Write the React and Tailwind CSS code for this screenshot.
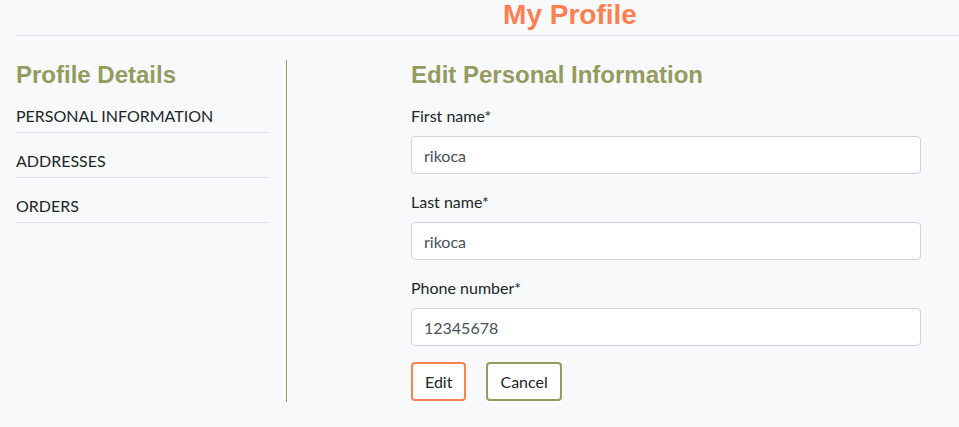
const olive = "text-[#949b5f]";

const navItems = ["PERSONAL INFORMATION", "ADDRESSES", "ORDERS"];

const fields = [
  { label: "First name", value: "rikoca" },
  { label: "Last name", value: "rikoca" },
  { label: "Phone number", value: "12345678" },
];

const Field = ({ label, value }) => (
  <div className="mb-4">
    <label className="block mb-2 text-base leading-6 text-[#212529]">
      {label}*
    </label>
    <input
      defaultValue={value}
      className="block w-full h-[38px] px-3 text-base text-[#495057] bg-white border border-[#ced4da] rounded-[4px] outline-none"
    />
  </div>
);

export default function App() {
  return (
    <div
      className="min-h-screen w-full overflow-hidden bg-[#f8f9fa] text-[#212529]"
      style={{ fontFamily: "Lato, 'Noto Sans', sans-serif" }}
    >
      <div className="pl-4">
        <div className="w-[1108px] border-b border-[#dee2e6] flex justify-center h-[36px]">
          <h1 className="font-['Liberation_Sans',Arial,sans-serif] font-bold text-[28px] leading-[30px] text-[#ff7f50]">
            My Profile
          </h1>
        </div>
      </div>

      <div className="flex pl-4 pt-6">
        <aside className="w-[254px] shrink-0">
          <h2 className={`font-['Liberation_Sans',Arial,sans-serif] font-bold text-[24px] leading-[29px] ${olive}`}>
            Profile Details
          </h2>
          <ul className="-mt-px">
            {navItems.map((item) => (
              <li
                key={item}
                className="pt-4 pb-1 text-base leading-6 border-b border-[#dee2e6]"
              >
                {item}
              </li>
            ))}
          </ul>
        </aside>

        <div className="ml-4 w-px bg-[#949b5f] h-[342px]" />

        <main className="ml-[124px] w-[510px]">
          <h2 className={`font-['Liberation_Sans',Arial,sans-serif] font-bold text-[24px] leading-[29px] mb-[15px] ${olive}`}>
            Edit Personal Information
          </h2>
          {fields.map((f) => (
            <Field key={f.label} {...f} />
          ))}
          <div className="flex gap-5">
            <button className="h-[39px] px-3 text-base bg-white border-2 border-[#ff7f50] rounded-[4px]">
              Edit
            </button>
            <button className="h-[39px] px-3 text-base bg-white border-2 border-[#949b5f] rounded-[4px]">
              Cancel
            </button>
          </div>
        </main>
      </div>
    </div>
  );
}
